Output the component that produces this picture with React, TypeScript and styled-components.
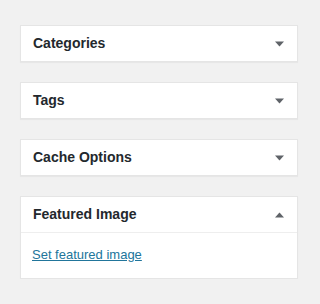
import React from "react";
import styled, { createGlobalStyle } from "styled-components";

const Global = createGlobalStyle`
  html, body {
    margin: 0;
    padding: 0;
    background: #f1f1f1;
  }
  body {
    font-family: "Liberation Sans", Arial, sans-serif;
    color: #23282d;
  }
`;

const Sidebar = styled.div`
  padding: 25px 20px 0 20px;
  width: 278px;
  display: flex;
  flex-direction: column;
  gap: 20px;
`;

const Box = styled.div`
  background: #fff;
  border: 1px solid #e5e5e5;
  box-shadow: 0 1px 1px rgba(0, 0, 0, 0.04);
`;

const Header = styled.div<{ $open?: boolean }>`
  display: flex;
  align-items: center;
  justify-content: space-between;
  height: 35px;
  padding: 0 0 0 12px;
  border-bottom: ${(p) => (p.$open ? "1px solid #eee" : "none")};
`;

const Title = styled.h2`
  margin: 0;
  font-size: 14px;
  font-weight: 700;
  line-height: 19px;
  color: #23282d;
`;

const Toggle = styled.span`
  width: 36px;
  height: 35px;
  display: flex;
  align-items: center;
  justify-content: center;
  color: #5f6368;
`;

const Inside = styled.div`
  padding: 12px 12px 13px 11px;
`;

const Link = styled.a`
  font-size: 13px;
  line-height: 20px;
  color: #21759b;
  text-decoration: underline;
`;

const Arrow = ({ up }: { up?: boolean }) => (
  <svg width="9" height="6" viewBox="0 0 9 6">
    {up ? (
      <polygon points="0,5.5 9,5.5 4.5,0.5" fill="currentColor" />
    ) : (
      <polygon points="0,0.5 9,0.5 4.5,5.5" fill="currentColor" />
    )}
  </svg>
);

const Panel = ({ title, open, children }: { title: string; open?: boolean; children?: React.ReactNode }) => (
  <Box>
    <Header $open={open}>
      <Title>{title}</Title>
      <Toggle>
        <Arrow up={open} />
      </Toggle>
    </Header>
    {open && <Inside>{children}</Inside>}
  </Box>
);

export default function App() {
  return (
    <>
      <Global />
      <Sidebar>
        <Panel title="Categories" />
        <Panel title="Tags" />
        <Panel title="Cache Options" />
        <Panel title="Featured Image" open>
          <Link href="#">Set featured image</Link>
        </Panel>
      </Sidebar>
    </>
  );
}
